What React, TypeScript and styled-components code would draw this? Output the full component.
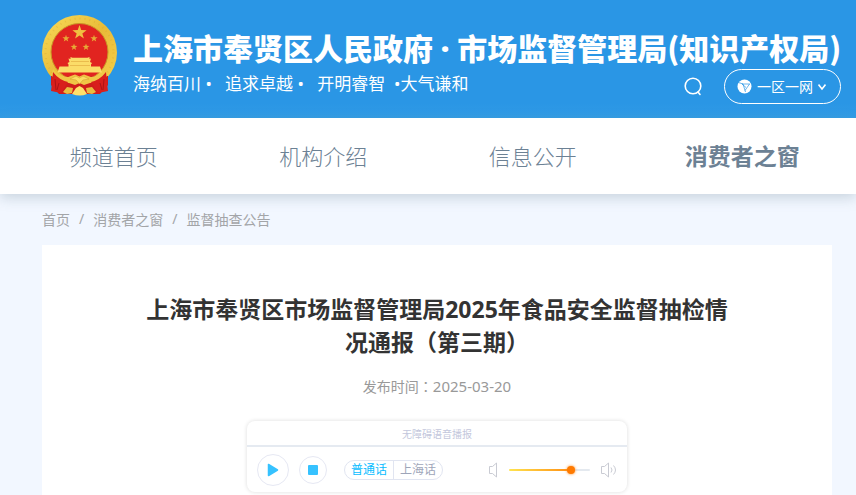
import React, { useState } from "react";
import styled, { createGlobalStyle } from "styled-components";

const sans = `"Noto Sans", "Noto Sans CJK SC", sans-serif`;
const cjk = `"Noto Sans CJK SC", "Noto Sans", sans-serif`;

const GlobalStyle = createGlobalStyle`
  *, *::before, *::after { box-sizing: border-box; }
  body {
    margin: 0;
    background: #f2f7ff;
    font-family: ${sans};
    color: #333;
    overflow: hidden;
  }
  button { font: inherit; color: inherit; padding: 0; margin: 0; background: none; border: 0; cursor: pointer; }
  a { color: inherit; text-decoration: none; }
  svg { display: block; }
`;

const Header = styled.header`
  display: flex;
  align-items: flex-start;
  gap: 16px;
  height: 118px;
  padding: 14px 15px 0 41px;
  background: linear-gradient(#2a96e5 0%, #2a96e5 88%, #319ce6 100%);
  color: #fff;
`;

const Brand = styled.div`
  flex: 1;
  min-width: 0;
  padding-top: 11px;
`;

const SiteName = styled.h1`
  margin: 0;
  font: 900 30px/44px ${cjk};
  white-space: nowrap;
`;

const Separator = styled.span`
  font-family: ${sans};
  line-height: 1;
`;

const BrandRow = styled.div`
  display: flex;
  justify-content: space-between;
  align-items: flex-start;
`;

const Motto = styled.p`
  margin: 0;
  font: 400 17px/30px ${sans};
  white-space: pre;
`;

const Tools = styled.div`
  display: flex;
  align-items: center;
  gap: 22px;
`;

const Pill = styled.button`
  display: flex;
  align-items: center;
  gap: 5px;
  height: 35px;
  padding: 0 14px 0 12px;
  border: 1px solid #fff;
  border-radius: 18px;
  font-size: 14px;
  line-height: 20px;
  white-space: nowrap;
`;

const Nav = styled.nav`
  position: relative;
  display: grid;
  grid-template-columns: repeat(4, 1fr);
  align-items: center;
  height: 76px;
  padding: 0 9px 3px;
  background: #fff;
  box-shadow: 0 4px 12px rgba(110, 135, 150, 0.3);
`;

const NavLink = styled.a<{ $active?: boolean }>`
  text-align: center;
  color: #6c8194;
  font-size: ${(p) => (p.$active ? 23 : 22)}px;
  font-weight: ${(p) => (p.$active ? 700 : 300)};
`;

const Main = styled.main`
  padding: 0 24px 0 42px;
`;

const Crumbs = styled.nav`
  display: flex;
  align-items: center;
  gap: 9px;
  height: 51px;
  padding-bottom: 2px;
  font-size: 14px;
  color: #a3a5a8;
`;

const Article = styled.article`
  display: flex;
  flex-direction: column;
  align-items: center;
  padding-top: 48px;
  min-height: 250px;
  background: #fff;
`;

const Headline = styled.h2`
  max-width: 600px;
  margin: 0;
  font-size: 23px;
  line-height: 33px;
  font-weight: 700;
  text-align: center;
  color: #333;
`;

const Colon = styled.span`
  font-family: "Noto Sans CJK TC", sans-serif;
  line-height: 1;
`;

const PublishDate = styled.p`
  margin: 17px 0 23px;
  font-size: 14px;
  line-height: 22px;
  color: #999;

  time { font-size: 15px; line-height: 1; }
`;

const Player = styled.section`
  width: 380px;
  border-radius: 8px;
  background: #fff;
  box-shadow: 0 0 4px rgba(0, 0, 0, 0.14);
`;

const PlayerTitle = styled.div`
  height: 26px;
  border-bottom: 2px solid #e5eaf1;
  font-size: 10px;
  line-height: 26px;
  text-align: center;
  color: #c3c7dc;
`;

const Controls = styled.div`
  display: flex;
  align-items: center;
  height: 45px;
  padding: 0 10px;
`;

const RoundButton = styled.button<{ $size: number }>`
  display: grid;
  place-items: center;
  width: ${(p) => p.$size}px;
  height: ${(p) => p.$size}px;
  margin-right: 10px;
  border: 1px solid #e6e8f3;
  border-radius: 50%;
  color: #36c2ff;
`;

const Languages = styled.div`
  display: flex;
  margin-left: 7px;
  height: 20px;
  border: 1px solid #e1e5f1;
  border-radius: 10px;
`;

const Language = styled.button<{ $on: boolean }>`
  padding: 0 6px;
  font-size: 12px;
  line-height: 18px;
  color: ${(p) => (p.$on ? "#09bcff" : "#9ea5b9")};
  & + & { border-left: 1px solid #e1e5f1; }
`;

const Volume = styled.div`
  display: flex;
  align-items: center;
  gap: 10px;
  margin-left: auto;
  color: #c9cbd3;
`;

const Slider = styled.input`
  appearance: none;
  width: 81px;
  height: 14px;
  margin: 0;
  background: transparent;
  &::-webkit-slider-runnable-track {
    height: 2px;
    border-radius: 1px;
    background: linear-gradient(90deg, #ffe450, #ff8a10) 0 0 / var(--level) 100% no-repeat, #e4e9ef;
  }
  &::-webkit-slider-thumb {
    appearance: none;
    width: 8px;
    height: 8px;
    margin-top: -3px;
    border-radius: 50%;
    background: #ff7a00;
    box-shadow: 0 0 3px #ff8c1c;
  }
`;

const star = (cx: number, cy: number, r: number) =>
  Array.from({ length: 10 }, (_, i) => {
    const a = (Math.PI / 5) * i - Math.PI / 2;
    const d = i % 2 ? r * 0.4 : r;
    return `${(cx + d * Math.cos(a)).toFixed(2)},${(cy + d * Math.sin(a)).toFixed(2)}`;
  }).join(" ");

function Emblem() {
  return (
    <svg width="76" height="84" viewBox="0 0 76 84" role="img" aria-label="国徽">
      <defs>
        <linearGradient id="gold" x1="0" y1="0" x2="1" y2="1">
          <stop offset="0" stopColor="#f8dc5a" />
          <stop offset=".5" stopColor="#e9bb38" />
          <stop offset="1" stopColor="#f5d34c" />
        </linearGradient>
      </defs>
      <circle cx="38.5" cy="38.5" r="37.5" fill="url(#gold)" />
      <circle cx="38.5" cy="38.5" r="34" fill="none" stroke="#d8a22c" strokeWidth="2" strokeDasharray="1 4" opacity=".35" />
      <circle cx="38.5" cy="38" r="28.500" fill="#e12420" stroke="#c99526" />
      <polygon points={star(38.5, 18.5, 7.5)} fill="#f0bf40" />
      <polygon points={star(25, 24.5, 3.8)} fill="#e7a936" />
      <polygon points={star(53, 24.5, 3.8)} fill="#e7a936" />
      <polygon points={star(33, 33, 3.6)} fill="#e7a936" />
      <polygon points={star(45, 33, 3.6)} fill="#e7a936" />
      <path d="M29.500 43l2 .7h15l2-.7v2l1.500-.5-1 3.500 2 1-1 1.500v2h9l2 6H16.500l2-6h9v-2l-1-1.500 2-1-1-3.500 2 .5z" fill="#fbdc68" />
      <path d="M30 47.500h18M29 51.500h20" stroke="#e3ae42" strokeWidth=".7" />
      <path d="M10 62h57v9l-8 9H18l-8-9z" fill="#cf1d1b" />
      <path d="M12 55l6 6 9 2 7-2.500 4.500 2 4.500-2 7 2.500 9-2 6-6 2 6-7 7-11 1-6 2-4.500-2-4.500 2-6-2-11-1-7-7z" fill="#f0c746" />
      <path d="M12 58q6 8 15 10l-3 5-4 6-10-2 1-8zM65 58q-6 8-15 10l3 5 4 6 10-2-1-8z" fill="#d81f1c" />
      <path d="M14 65l1 11M18 69l-2 7M63 65l-1 11M59 69l2 7" stroke="#ad1315" fill="none" />
      <path d="M29 65l6-3 3.500 2 3.500-2 6 3-6 1-3.500 4-3.500-4z" fill="#fbdd62" stroke="#d39a2e" strokeWidth=".5" />
      <path d="M22 78l4-5 6 1-1 5-5 1zM55 78l-4-5-6 1 1 5 5 1z" fill="#e9bc3f" />
      <path d="M31 80l4-6 3.500-2 3.500 2 4 6q-7 3-15 0z" fill="#ffe06a" />
    </svg>
  );
}

const SearchIcon = () => (
  <svg width="18" height="19" viewBox="0 0 18 19" fill="none" stroke="#fff" strokeWidth="1.6" strokeLinecap="round">
    <circle cx="9" cy="9" r="7.8" />
    <path d="M14 15l2 2.500" />
  </svg>
);

const GlobeIcon = () => (
  <svg width="15" height="15" viewBox="0 0 15 15">
    <circle cx="7.5" cy="7.5" r="7" fill="#fff" />
    <path d="M1.500 3.500l4.500 1.500 2.500 8M5 5h8M12.500 5L8 11.500M5 5l4 3.500" fill="none" stroke="#2a96e5" strokeWidth=".7" />
  </svg>
);

const ChevronIcon = () => (
  <svg width="8" height="8" viewBox="0 0 8 8" fill="none" stroke="#fff" strokeWidth="1.6">
    <path d="M.5 1.500L4 6l3.500-4.500" />
  </svg>
);

const SpeakerIcon = ({ loud }: { loud?: boolean }) => (
  <svg width={loud ? 17 : 11} height="16" viewBox={loud ? "0 0 17 16" : "0 0 11 16"} fill="none" stroke="currentColor">
    <path d="M1.500 4.500h3l4-3.500v14l-4-3.500h-3z" strokeLinejoin="round" />
    {loud && <path d="M11 5.500q2 2.500 0 5M13.500 3.500q4 4.500 0 9" />}
  </svg>
);

const navItems = ["频道首页", "机构介绍", "信息公开", "消费者之窗"];
const crumbs = ["首页", "消费者之窗", "监督抽查公告"];
const languages = ["普通话", "上海话"];

export default function App() {
  const [language, setLanguage] = useState(languages[0]);
  const [volume, setVolume] = useState(80);

  return (
    <>
      <GlobalStyle />
      <Header>
        <Emblem />
        <Brand>
          <SiteName>上海市奉贤区人民政府<Separator> · </Separator>市场监督管理局(知识产权局)</SiteName>
          <BrandRow>
            <Motto>{"海纳百川 •   追求卓越 •   开明睿智  •大气谦和"}</Motto>
            <Tools>
              <button aria-label="搜索"><SearchIcon /></button>
              <Pill><GlobeIcon />一区一网<ChevronIcon /></Pill>
            </Tools>
          </BrandRow>
        </Brand>
      </Header>
      <Nav>
        {navItems.map((item, i) => (
          <NavLink key={item} href="#" $active={i === 3}>{item}</NavLink>
        ))}
      </Nav>
      <Main>
        <Crumbs aria-label="当前位置">
          {crumbs.map((item, i) => (
            <React.Fragment key={item}>
              {i > 0 && <span>/</span>}
              <a href="#">{item}</a>
            </React.Fragment>
          ))}
        </Crumbs>
        <Article>
          <Headline>
            上海市奉贤区市场监督管理局2025年食品安全监督抽检情况通报（第三期）
          </Headline>
          <PublishDate>发布时间<Colon>：</Colon><time dateTime="2025-03-20">2025-03-20</time></PublishDate>
          <Player aria-label="无障碍语音播报">
            <PlayerTitle>无障碍语音播报</PlayerTitle>
            <Controls>
              <RoundButton $size={32} aria-label="播放">
                <svg width="12" height="14" viewBox="0 0 12 14"><path d="M1.500 1.500v11l9-5.500z" fill="currentColor" stroke="currentColor" strokeWidth="1.5" strokeLinejoin="round" /></svg>
              </RoundButton>
              <RoundButton $size={28} aria-label="停止">
                <svg width="10" height="10"><rect width="10" height="10" rx="1" fill="currentColor" /></svg>
              </RoundButton>
              <Languages>
                {languages.map((name) => (
                  <Language key={name} $on={name === language} aria-pressed={name === language} onClick={() => setLanguage(name)}>{name}</Language>
                ))}
              </Languages>
              <Volume>
                <SpeakerIcon />
                <Slider
                  type="range"
                  aria-label="音量"
                  min={0}
                  max={100}
                  value={volume}
                  onChange={(e) => setVolume(Number(e.target.value))}
                  style={{ "--level": `${volume}%` } as React.CSSProperties}
                />
                <SpeakerIcon loud />
              </Volume>
            </Controls>
          </Player>
        </Article>
      </Main>
    </>
  );
}
